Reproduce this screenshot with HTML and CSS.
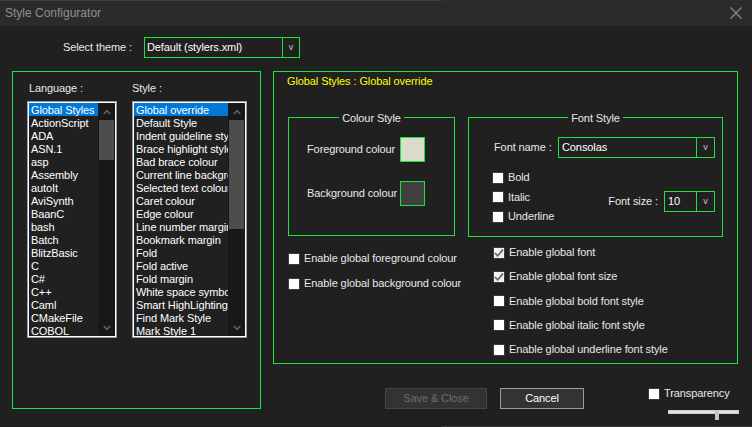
FILE: index.html
```html
<!DOCTYPE html>
<html>
<head>
<meta charset="utf-8">
<title>Style Configurator</title>
<link rel="stylesheet" href="styles.css">
</head>
<body>
<div class="window">
  <div class="titlebar">
    <span class="title">Style Configurator</span>
    <svg class="close" width="12" height="12" viewBox="0 0 12 12"><path d="M0.5 0.5 L11.5 11.5 M11.5 0.5 L0.5 11.5" stroke="#8a8a8a" stroke-width="1.3" fill="none"/></svg>
  </div>

  <div class="theme-row">
    <span class="theme-label">Select theme :</span>
    <div class="combo theme-combo"><span class="combo-text">Default (stylers.xml)</span><span class="combo-btn">v</span></div>
  </div>

  <div class="main">
    <div class="lang-box">
      <div class="list-col lang-col">
        <div class="col-label lang-label">Language :</div>
        <div class="listbox">
          <div class="items">
            <div class="item sel">Global Styles</div>
            <div class="item">ActionScript</div>
            <div class="item">ADA</div>
            <div class="item">ASN.1</div>
            <div class="item">asp</div>
            <div class="item">Assembly</div>
            <div class="item">autoIt</div>
            <div class="item">AviSynth</div>
            <div class="item">BaanC</div>
            <div class="item">bash</div>
            <div class="item">Batch</div>
            <div class="item">BlitzBasic</div>
            <div class="item">C</div>
            <div class="item">C#</div>
            <div class="item">C++</div>
            <div class="item">Caml</div>
            <div class="item">CMakeFile</div>
            <div class="item">COBOL</div>
          </div>
          <div class="scrollbar">
            <div class="sb-arrow"><svg width="8" height="6" viewBox="0 0 8 6"><polyline points="0.8,5 4,1.6 7.2,5" stroke="#5c5c5c" stroke-width="1.8" fill="none"/></svg></div>
            <div class="sb-thumb lang-thumb"></div>
            <div class="sb-fill"></div>
            <div class="sb-arrow"><svg width="8" height="6" viewBox="0 0 8 6"><polyline points="0.8,1 4,4.4 7.2,1" stroke="#5c5c5c" stroke-width="1.8" fill="none"/></svg></div>
          </div>
        </div>
      </div>
      <div class="list-col style-col">
        <div class="col-label">Style :</div>
        <div class="listbox">
          <div class="items">
            <div class="item sel">Global override</div>
            <div class="item">Default Style</div>
            <div class="item">Indent guideline style</div>
            <div class="item">Brace highlight style</div>
            <div class="item">Bad brace colour</div>
            <div class="item">Current line background colour</div>
            <div class="item">Selected text colour</div>
            <div class="item">Caret colour</div>
            <div class="item">Edge colour</div>
            <div class="item">Line number margin</div>
            <div class="item">Bookmark margin</div>
            <div class="item">Fold</div>
            <div class="item">Fold active</div>
            <div class="item">Fold margin</div>
            <div class="item">White space symbol</div>
            <div class="item">Smart HighLighting</div>
            <div class="item">Find Mark Style</div>
            <div class="item">Mark Style 1</div>
          </div>
          <div class="scrollbar">
            <div class="sb-arrow"><svg width="8" height="6" viewBox="0 0 8 6"><polyline points="0.8,5 4,1.6 7.2,5" stroke="#5c5c5c" stroke-width="1.8" fill="none"/></svg></div>
            <div class="sb-thumb style-thumb"></div>
            <div class="sb-fill"></div>
            <div class="sb-arrow"><svg width="8" height="6" viewBox="0 0 8 6"><polyline points="0.8,1 4,4.4 7.2,1" stroke="#5c5c5c" stroke-width="1.8" fill="none"/></svg></div>
          </div>
        </div>
      </div>
    </div>

    <div class="right-col">
      <div class="style-box">
        <div class="style-title">Global Styles : Global override</div>
        <div class="groups">
          <div class="colour-col">
            <div class="group colour-group">
              <div class="legend">Colour Style</div>
              <div class="colour-grid">
                <span>Foreground colour</span><span class="swatch fg"></span>
                <span>Background colour</span><span class="swatch bg"></span>
              </div>
            </div>
            <div class="checks colour-checks">
              <div class="check"><span class="box"></span>Enable global foreground colour</div>
              <div class="check"><span class="box"></span>Enable global background colour</div>
            </div>
          </div>
          <div class="font-col">
            <div class="group font-group">
              <div class="legend">Font Style</div>
              <div class="font-name-row">
                <span class="fn-label">Font name :</span>
                <div class="combo fn-combo"><span class="combo-text">Consolas</span><span class="combo-btn">v</span></div>
              </div>
              <div class="font-opts">
                <div class="checks style-checks">
                  <div class="check"><span class="box"></span>Bold</div>
                  <div class="check"><span class="box"></span>Italic</div>
                  <div class="check"><span class="box"></span>Underline</div>
                </div>
                <div class="font-size">
                  <span class="fs-label">Font size :</span>
                  <div class="combo fs-combo"><span class="combo-text">10</span><span class="combo-btn">v</span></div>
                </div>
              </div>
            </div>
            <div class="checks global-checks">
              <div class="check"><span class="box checked"><svg width="10" height="10" viewBox="0 0 10 10"><polyline points="1,5 3.6,7.8 9,1.6" stroke="#6e6e6e" stroke-width="1.8" fill="none"/></svg></span>Enable global font</div>
              <div class="check"><span class="box checked"><svg width="10" height="10" viewBox="0 0 10 10"><polyline points="1,5 3.6,7.8 9,1.6" stroke="#6e6e6e" stroke-width="1.8" fill="none"/></svg></span>Enable global font size</div>
              <div class="check"><span class="box"></span>Enable global bold font style</div>
              <div class="check"><span class="box"></span>Enable global italic font style</div>
              <div class="check"><span class="box"></span>Enable global underline font style</div>
            </div>
          </div>
        </div>
      </div>

      <div class="bottom-row">
        <button class="btn btn-disabled">Save &amp; Close</button>
        <button class="btn btn-cancel">Cancel</button>
        <div class="transp">
          <div class="check"><span class="box"></span>Transparency</div>
          <div class="slider"><div class="track"></div><div class="thumb"></div></div>
        </div>
      </div>
    </div>
  </div>
</div>
</body>
</html>
```

FILE: styles.css
```css
html, body {
  margin: 0;
  padding: 0;
}
body {
  background: #202020;
  font-family: "Liberation Sans", Arial, sans-serif;
  font-size: 11px;
  line-height: 13px;
  letter-spacing: -0.1px;
  color: #e8e8e8;
}
.window {
  width: 752px;
  height: 427px;
  overflow: hidden;
  background:
    linear-gradient(to right, #1a1a1a 441px, #3a3a3a 441px) left bottom / 100% 1px no-repeat,
    #202020;
}

/* title bar */
.titlebar {
  height: 26px;
  display: flex;
  align-items: flex-start;
  padding-left: 5px;
  box-sizing: border-box;
  background:
    linear-gradient(to right, #3e3e3e 441px, #2f2f2f 441px) left top / 100% 1px no-repeat,
    #2b2b2b;
}
.title {
  font-size: 12px;
  line-height: 26px;
  letter-spacing: 0;
  color: #8f8f8f;
}
.close {
  margin-left: auto;
  margin-right: 10px;
  margin-top: 7px;
}

/* theme row */
.theme-row {
  display: flex;
  align-items: center;
  padding-top: 11px;
  padding-left: 63px;
}
.theme-label {
  width: 81px;
  white-space: nowrap;
}
.combo {
  display: flex;
  height: 21px;
  box-sizing: border-box;
  border: 1px solid #1fe13c;
  background: #202020;
}
.combo-text {
  flex: 1;
  padding-left: 2px;
  line-height: 19px;
  color: #fff;
  white-space: nowrap;
}
.combo-btn {
  width: 18px;
  box-sizing: border-box;
  border-left: 1px solid #1fe13c;
  text-align: center;
  font-size: 9px;
  line-height: 18px;
  color: #c8c8c8;
}
.theme-combo { width: 156px; }
.theme-combo .combo-btn { width: 17px; }

/* main */
.main {
  display: flex;
  margin-top: 13px;
}
.lang-box {
  margin-left: 12px;
  width: 249px;
  height: 338px;
  box-sizing: border-box;
  border: 1px solid #1fe13c;
  padding: 10px 0 0 14px;
  display: flex;
  gap: 15px;
}
.lang-col { width: 90px; }
.style-col { width: 115px; }
.col-label {
  height: 13px;
  margin-bottom: 6px;
}
.lang-label { padding-left: 2px; }
.listbox {
  display: flex;
  height: 237px;
  box-sizing: border-box;
  border: 1px solid #9a9a9a;
  box-shadow: inset 0 0 0 1px #ffffff;
  padding: 1px;
  background: #202020;
}
.items {
  flex: 1;
  min-width: 0;
  overflow: hidden;
}
.item {
  height: 13px;
  line-height: 15px;
  padding-left: 2px;
  white-space: nowrap;
  color: #ffffff;
}
.item.sel { background: #0078d7; }
.scrollbar {
  width: 17px;
  flex: none;
  background: #181818;
  display: flex;
  flex-direction: column;
}
.sb-arrow {
  height: 17px;
  display: flex;
  align-items: center;
  justify-content: center;
  flex: none;
}
.sb-thumb {
  margin: 0 1px;
  background: #4d4d4d;
  flex: none;
}
.lang-thumb { height: 40px; }
.style-thumb { height: 109px; }
.sb-fill { flex: 1; }

/* right side */
.right-col {
  margin-left: 12px;
  display: flex;
  flex-direction: column;
}
.style-box {
  width: 465px;
  height: 293px;
  box-sizing: border-box;
  border: 1px solid #1fe13c;
  padding: 3px 0 0 13px;
}
.style-title {
  color: #ffff00;
  height: 13px;
}
.groups {
  display: flex;
  margin-top: 29px;
  margin-left: 1px;
  gap: 13px;
}
.colour-col { width: 167px; }
.font-col { width: 255px; }
.group {
  border: 1px solid #1fe13c;
  box-sizing: border-box;
}
.colour-group { height: 119px; }
.font-group { height: 120px; }
.legend {
  display: table;
  margin: -6px auto 0;
  padding: 0 3px;
  background: #202020;
  height: 13px;
}
.colour-grid {
  display: grid;
  grid-template-columns: 93px 25px;
  row-gap: 19px;
  align-items: center;
  margin-top: 12px;
  padding-left: 18px;
}
.swatch {
  width: 25px;
  height: 25px;
  box-sizing: border-box;
  border: 1px solid #1fe13c;
}
.swatch.fg { background: #dcdccc; }
.swatch.bg { background: #3f3f3f; }

.checks {
  display: flex;
  flex-direction: column;
}
.check {
  display: flex;
  align-items: center;
  height: 13px;
  white-space: nowrap;
}
.box {
  width: 12px;
  height: 12px;
  box-sizing: border-box;
  border: 1px solid #3a3a3a;
  background: #ffffff;
  margin-right: 4px;
  flex: none;
  display: flex;
  align-items: center;
  justify-content: center;
}
.box.checked { background: #f2f2f2; }
.colour-checks {
  margin-top: 16px;
  gap: 12px;
}

.font-name-row {
  display: flex;
  align-items: center;
  margin-top: 12px;
  padding-left: 25px;
}
.fn-label { width: 64px; white-space: nowrap; }
.fn-combo { width: 157px; }
.fn-combo .combo-text { padding-left: 3px; }
.font-opts {
  display: flex;
  margin-top: 13px;
}
.style-checks {
  margin-left: 23px;
  gap: 6.5px;
}
.font-size {
  display: flex;
  align-items: center;
  margin-left: auto;
  margin-right: 7px;
  margin-top: 9px;
}
.fs-label {
  white-space: nowrap;
  margin-right: 6px;
}
.fs-combo { width: 51px; }
.fs-combo .combo-text { padding-left: 3px; }
.global-checks {
  margin-top: 9px;
  margin-left: 25px;
  gap: 11.25px;
}

/* bottom */
.bottom-row {
  display: flex;
  align-items: flex-start;
  margin-top: 24px;
  padding-left: 112px;
}
.btn {
  height: 21px;
  box-sizing: border-box;
  padding: 0;
  margin: 0;
  font: inherit;
  letter-spacing: inherit;
  line-height: 19px;
  background: #333333;
  text-align: center;
}
.btn-disabled {
  width: 102px;
  border: 1px solid #454545;
  color: #6d6d6d;
}
.btn-cancel {
  width: 84px;
  margin-left: 13px;
  border: 1px solid #9c9c9c;
  color: #ffffff;
}
.transp {
  margin-left: 64px;
  margin-top: -1px;
}
.slider {
  position: relative;
  width: 71px;
  height: 10px;
  margin-top: 10px;
  margin-left: 20px;
}
.track {
  margin-top: 3px;
  height: 4px;
  box-sizing: border-box;
  background: #e2e2e2;
  border: 1px solid #cfcfcf;
}
.thumb {
  position: absolute;
  left: 47px;
  top: 0;
  width: 4px;
  height: 10px;
  background: #c4c4c4;
}
```
